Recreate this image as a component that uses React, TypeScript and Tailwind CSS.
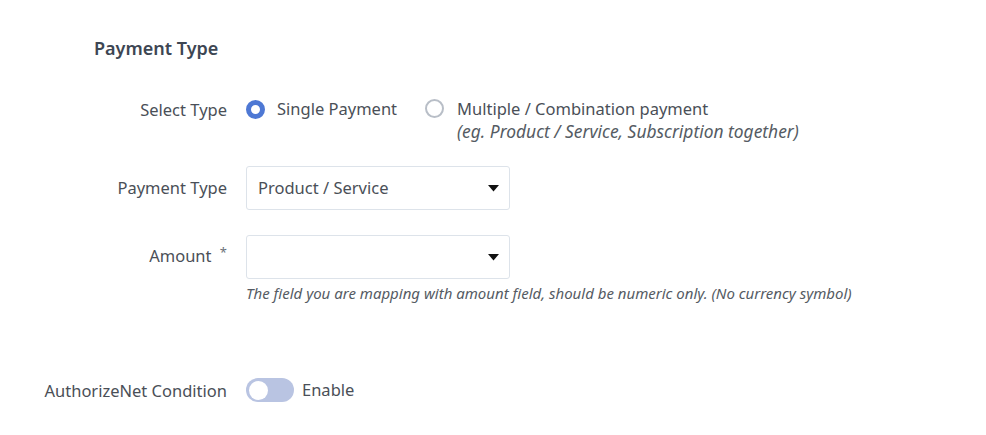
import React, { useState } from "react";

export default function App() {
  const [mode, setMode] = useState("single");
  const [enabled, setEnabled] = useState(false);

  return (
    <div
      className="w-[986px] h-[435px] bg-white text-[#4a4f57] overflow-hidden"
      style={{ fontFamily: '"Noto Sans", "Open Sans", sans-serif' }}
    >
      <h2 className="pt-[35px] pl-[94px] text-[18px] font-semibold text-[#3d4653] leading-[26px]">
        Payment Type
      </h2>

      <div className="mt-[35px] grid grid-cols-[227px_1fr] gap-x-[19px] items-start">
        {/* Select Type */}
        <label className="text-right text-[16.5px] leading-[26px] pt-[1px]">Select Type</label>
        <div className="flex items-start gap-[28px]">
          <button className="flex items-center gap-[12px]" onClick={() => setMode("single")}>
            <span
              className={
                mode === "single"
                  ? "w-[19px] h-[19px] rounded-full border-[5px] border-[#4e78d4] bg-white"
                  : "w-[19px] h-[19px] rounded-full border-2 border-[#b8bec7] bg-white"
              }
            />
            <span className="text-[16.5px] leading-[26px]">Single Payment</span>
          </button>
          <button className="flex items-start gap-[13px] text-left" onClick={() => setMode("multi")}>
            <span
              className={
                mode === "multi"
                  ? "mt-[3px] w-[19px] h-[19px] rounded-full border-[5px] border-[#4e78d4] bg-white"
                  : "mt-[3px] w-[19px] h-[19px] rounded-full border-2 border-[#b8bec7] bg-white"
              }
            />
            <span className="flex flex-col">
              <span className="text-[16.5px] leading-[26px]">Multiple / Combination payment</span>
              <span className="text-[17.4px] leading-[18px] italic text-[#555b63]">
                (eg. Product / Service, Subscription together)
              </span>
            </span>
          </button>
        </div>

        {/* Payment Type */}
        <label className="text-right text-[16.5px] leading-[26px] mt-[35px]">Payment Type</label>
        <div className="mt-[26px]">
          <div className="w-[264px] h-[44px] border border-[#dde3ea] rounded-[3px] flex items-center justify-between pl-[11px] pr-[10px]">
            <span className="text-[16.5px]">Product / Service</span>
            <Caret />
          </div>
        </div>

        {/* Amount */}
        <label className="text-right text-[16.5px] leading-[26px] mt-[33px]">
          Amount <span className="relative -top-[5px] text-[13px] ml-[4px] text-[#6b7079]">*</span>
        </label>
        <div className="mt-[25px]">
          <div className="w-[264px] h-[44px] border border-[#dde3ea] rounded-[3px] flex items-center justify-end pr-[10px]">
            <Caret />
          </div>
          <p className="mt-[4px] text-[15px] italic text-[#555b63] leading-[20px]">
            The field you are mapping with amount field, should be numeric only. (No currency symbol)
          </p>
        </div>

        {/* AuthorizeNet */}
        <label className="text-right text-[16.5px] leading-[26px] mt-[75px]">AuthorizeNet Condition</label>
        <div className="mt-[75px] flex items-center gap-[8px]">
          <button
            onClick={() => setEnabled(!enabled)}
            className={
              enabled
                ? "w-[48px] h-[24px] rounded-full bg-[#4e78d4] flex items-center justify-end px-[3px]"
                : "w-[48px] h-[24px] rounded-full bg-[#b9c4e2] flex items-center px-[3px]"
            }
          >
            <span className="w-[19px] h-[19px] rounded-full bg-white" />
          </button>
          <span className="text-[16.5px]">Enable</span>
        </div>
      </div>
    </div>
  );
}

function Caret() {
  return (
    <svg width="11" height="7" viewBox="0 0 11 7">
      <path d="M0 0 H11 L5.5 6.5 Z" fill="#111" />
    </svg>
  );
}
